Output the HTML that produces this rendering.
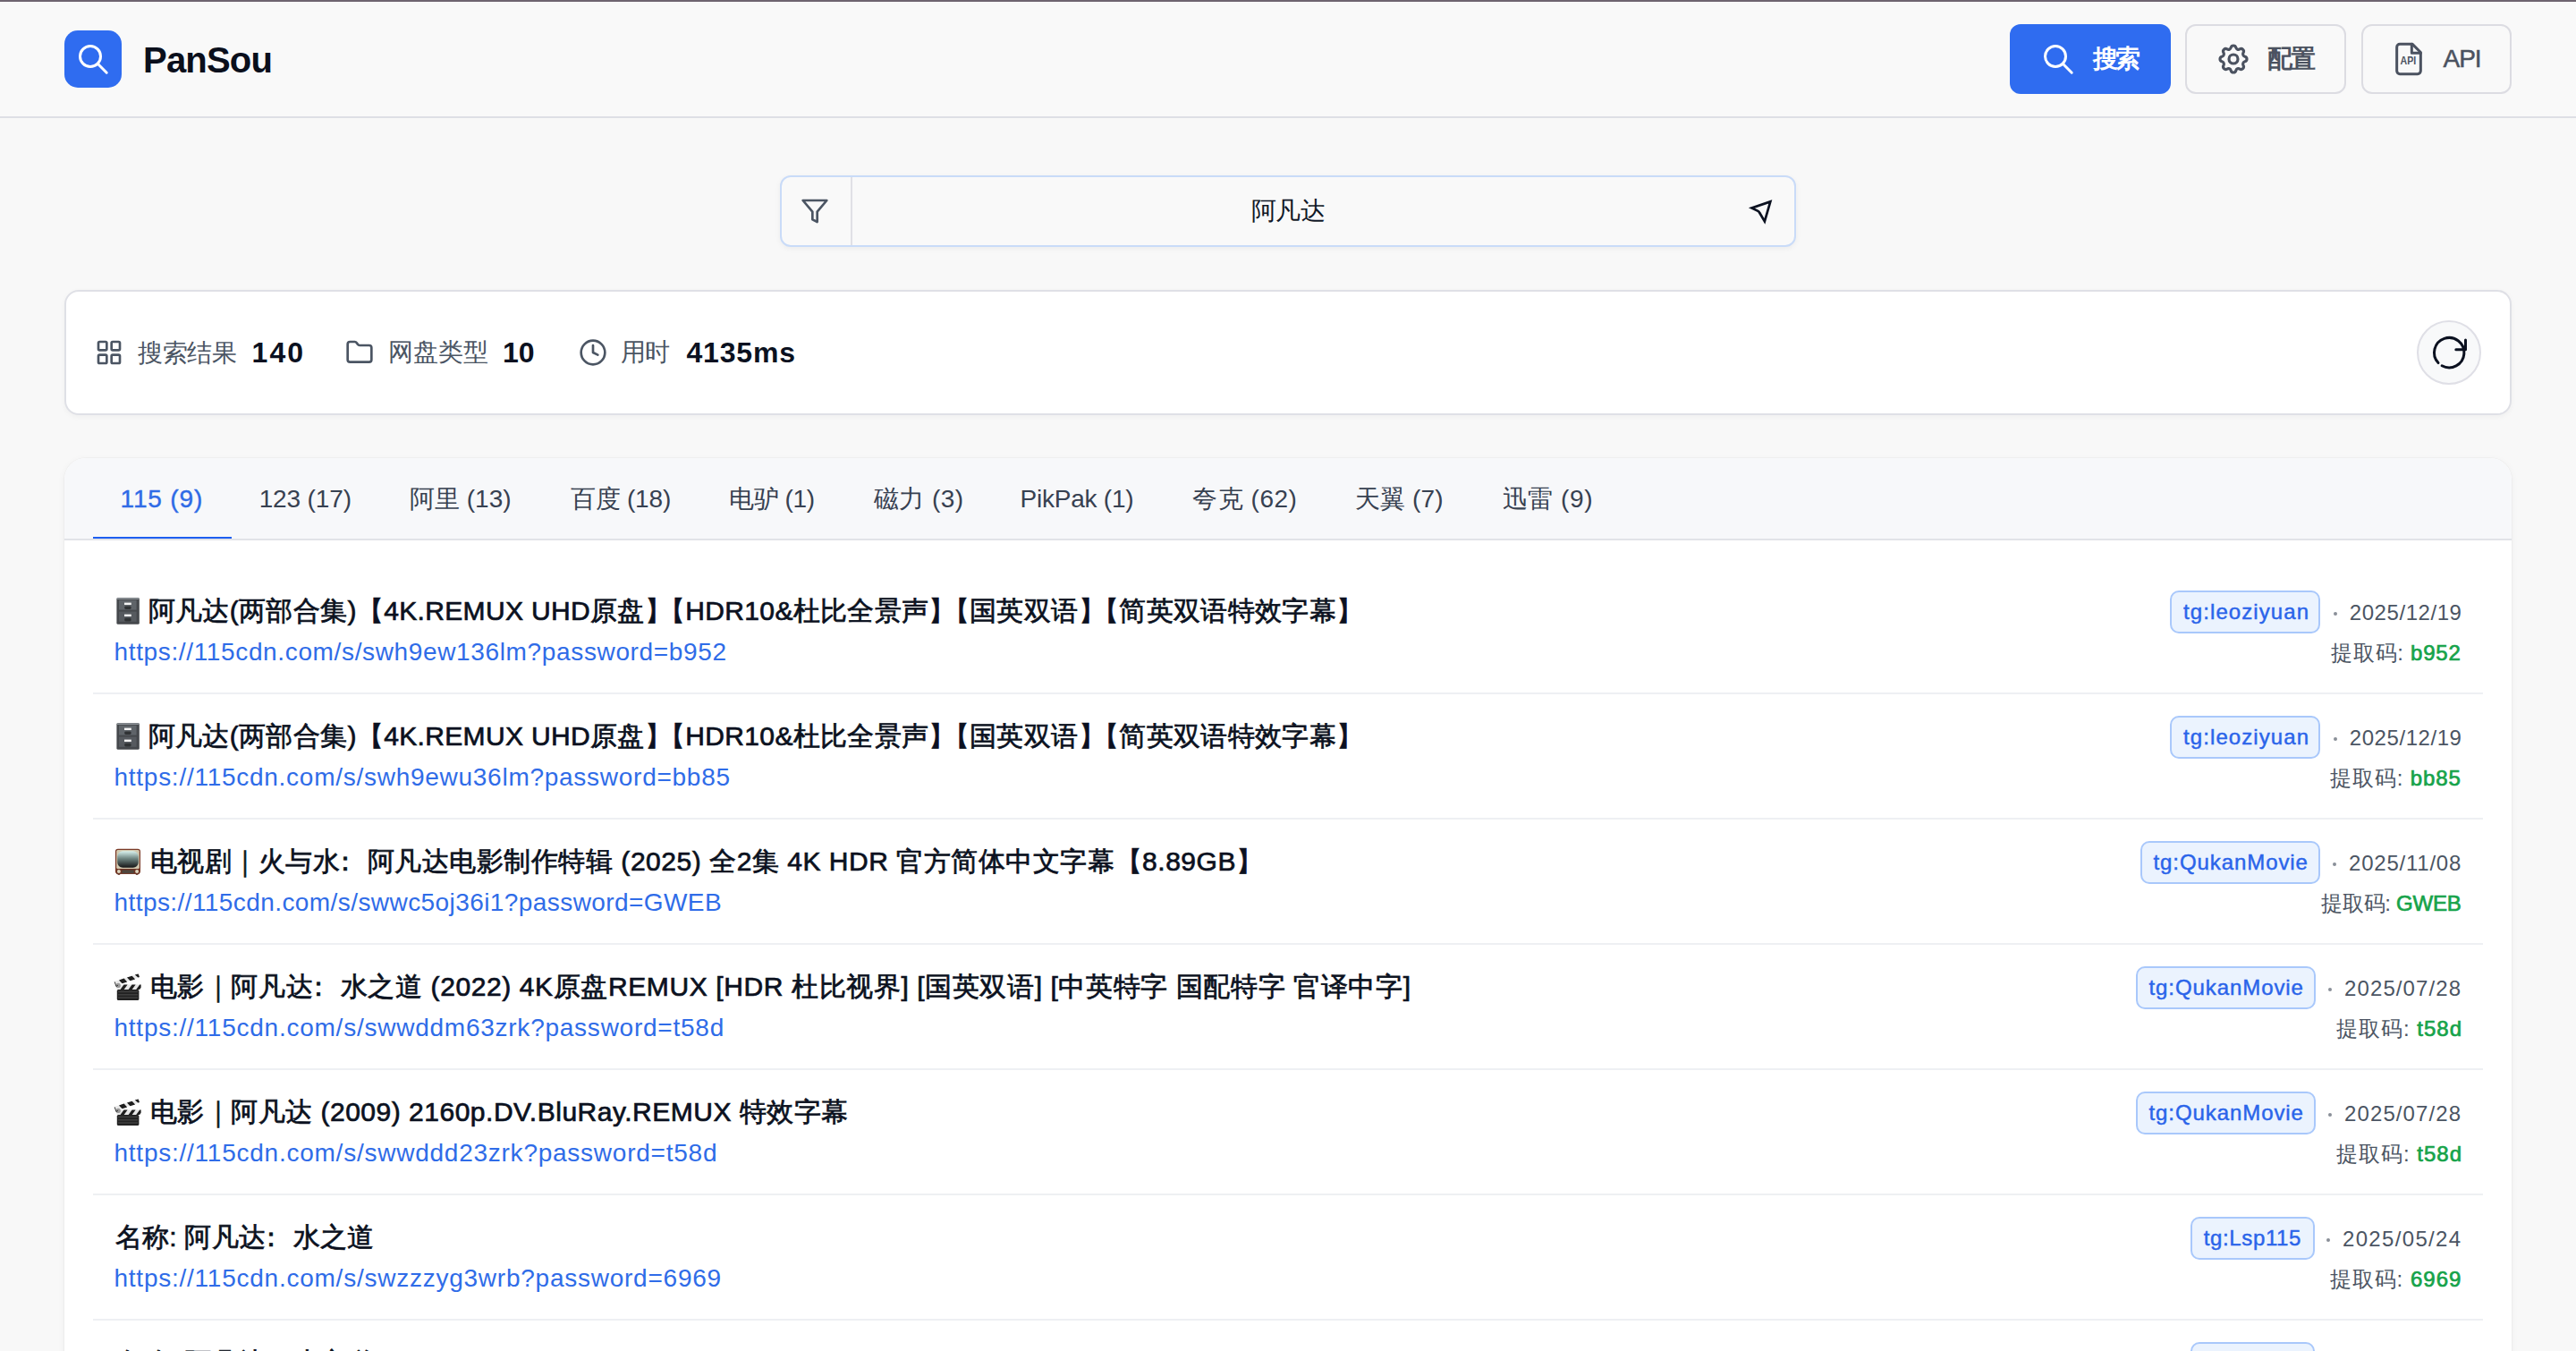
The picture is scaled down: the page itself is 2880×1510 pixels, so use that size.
<!DOCTYPE html>
<html lang="zh"><head><meta charset="utf-8"><title>PanSou</title>
<style>
html,body{margin:0;padding:0;}
body{width:2880px;height:1510px;overflow:hidden;position:relative;background:#f8f8f8;font-family:"Liberation Sans",sans-serif;color:#111827;}
.a{position:absolute}
@media (max-width:1500px){html{zoom:0.5}}
.t{position:absolute;white-space:nowrap}
#topline{position:absolute;left:0;top:0;width:2880px;height:2px;background:#6e6470}
#hdr{position:absolute;left:0;top:2px;width:2880px;height:128px;background:#f9f9f9;border-bottom:2px solid #dedfe5}
#logo{position:absolute;left:72px;top:32px;width:64px;height:64px;border-radius:15px;background:#2f6cf0}
#logo svg{position:absolute;left:12px;top:12px}
.brand{font-weight:700;color:#0a0f1c}
.btn{position:absolute;top:27px;height:78px;box-sizing:border-box;border-radius:12px}
.btn svg{position:absolute;top:17px}
.btt{font-weight:700}
.btt.w{color:#fff}
.btt.g{color:#4b5260}
#b3t{font-weight:400;-webkit-text-stroke:0.5px #4b5260}
#b1{left:2247px;width:180px;background:#2f6cf0}
#b2{left:2443px;width:180px;border:2px solid #dcdce2}
#b3{left:2640px;width:168px;border:2px solid #dcdce2}
#search{position:absolute;left:872px;top:196px;width:1136px;height:80px;box-sizing:border-box;border:2px solid #c9dbf8;border-radius:12px;background:#f9f9f9;box-shadow:0 2px 6px rgba(0,0,0,0.05)}
#sdiv{position:absolute;left:77px;top:0;width:2px;height:76px;background:#e0e0e6}
.stext{color:#111827}
#stats{position:absolute;left:72px;top:324px;width:2736px;height:140px;box-sizing:border-box;border:2px solid #dfe0e6;border-radius:16px;background:#fff;box-shadow:0 2px 6px rgba(0,0,0,0.04)}
.lbl{color:#4b5563}
.num{font-weight:700;color:#0b1120}
#refresh{position:absolute;left:2702px;top:358px;width:72px;height:72px;box-sizing:border-box;border-radius:50%;border:2px solid #dfdfe6;background:#f8f9fa}
#res{position:absolute;left:72px;top:512px;width:2736px;height:1100px;border-radius:24px;background:#fff;box-shadow:0 0 0 1px rgba(0,0,0,0.025), 0 2px 8px rgba(0,0,0,0.05);overflow:hidden}
#tabs{position:absolute;left:0;top:0;width:2736px;height:90px;background:#f7f8fa;border-bottom:2px solid #e1e3e8}
.tab{color:#374151}
.tab.act{color:#2f6be6;-webkit-text-stroke:0.4px #2f6be6}
#uline{position:absolute;left:104px;top:600px;width:155px;height:2px;background:#1d5ef0}
.title{font-weight:400;color:#0b1120;-webkit-text-stroke:0.7px #0b1120}
.emo{position:absolute;left:124px;width:40px;height:40px}
.link{color:#2f6ce8}
.tagbox{position:absolute;height:48px;box-sizing:border-box;border:2px solid #a9c8fb;background:#ebf3fe;border-radius:10px}
.tagt{color:#2a64ea;-webkit-text-stroke:0.45px #2a64ea}
.dot{position:absolute;width:4px;height:4px;border-radius:50%;background:#8a8f98}
.date{color:#4b5563}
.codel{color:#4b5563}
.code{color:#16a34a;font-weight:400;-webkit-text-stroke:0.7px #16a34a}
.fc{position:relative;left:-9px}
.tr{margin-left:-15px}
.divd{position:absolute;left:104px;width:2672px;height:2px;background:#eef0f3}
</style></head><body>
<div id="topline"></div>
<div id="hdr">
  <div id="logo"><svg width="40" height="40" viewBox="0 0 40 40" fill="none" stroke="#fff" stroke-width="3" stroke-linecap="round" style="left:12.8px;top:12.5px"><circle cx="16" cy="16" r="11.5"/><path d="M24.3 24.3 L34.2 34.2"/></svg></div>
</div>
<div class="btn" id="b1"><svg width="40" height="40" viewBox="0 0 40 40" fill="none" stroke="#fff" stroke-width="3" stroke-linecap="round" style="left:34.5px;top:19.5px"><circle cx="16" cy="16" r="11.5"/><path d="M24.3 24.3 L34.2 34.2"/></svg></div>
<div class="btn" id="b2"><svg width="40" height="40" viewBox="0 0 24 24" fill="none" stroke="#4b5260" stroke-width="1.9" stroke-linecap="round" stroke-linejoin="round" style="left:31.8px;top:16.8px"><path d="M10.325 4.317c.426 -1.756 2.924 -1.756 3.35 0a1.724 1.724 0 0 0 2.573 1.066c1.543 -.94 3.31 .826 2.37 2.37a1.724 1.724 0 0 0 1.065 2.572c1.756 .426 1.756 2.924 0 3.35a1.724 1.724 0 0 0 -1.066 2.573c.94 1.543 -.826 3.31 -2.37 2.37a1.724 1.724 0 0 0 -2.572 1.065c-.426 1.756 -2.924 1.756 -3.35 0a1.724 1.724 0 0 0 -2.573 -1.066c-1.543 .94 -3.310 -.826 -2.37 -2.37a1.724 1.724 0 0 0 -1.065 -2.572c-1.756 -.426 -1.756 -2.924 0 -3.35a1.724 1.724 0 0 0 1.066 -2.573c-.94 -1.543 .826 -3.31 2.37 -2.37c1 .608 2.296 .07 2.572 -1.065z"/><circle cx="12" cy="12" r="3"/></svg></div>
<div class="btn" id="b3"><svg width="40" height="40" viewBox="0 0 24 24" fill="none" stroke="#4b5260" stroke-width="1.8" stroke-linecap="round" stroke-linejoin="round" style="left:31px;top:16.9px"><path d="M14.5 2H6a2 2 0 0 0-2 2v16a2 2 0 0 0 2 2h12a2 2 0 0 0 2-2V7.5L14.5 2z"/><polyline points="14 2 14 8 20 8"/><text x="11.65" y="15.45" text-anchor="middle" font-size="7.2" font-weight="700" fill="#4b5260" stroke="none" font-family="Liberation Sans" textLength="10.6" lengthAdjust="spacingAndGlyphs">API</text></svg></div>
<div id="search">
  <svg class="a" style="left:20.9px;top:21.9px;color:#4b5563" width="32" height="32" viewBox="0 0 24 24" fill="none" stroke="currentColor" stroke-linecap="round" stroke-linejoin="round" stroke-width="2"><polygon points="22 3 2 3 10 12.46 10 19 14 21 14 12.46 22 3"/></svg>
  <div id="sdiv"></div>
  <svg class="a" style="left:1074px;top:18px" width="40" height="40" viewBox="0 0 40 40" fill="none" stroke="#0b1120" stroke-width="2.7" stroke-linejoin="miter" stroke-miterlimit="10"><path d="M31.3 9.4 L10.4 16.4 L17.4 19.9 Q18.6 20.6 19.2 21.8 L24.9 31.4 Z"/></svg>
</div>
<div id="stats">
  <svg class="a" style="left:32px;top:52px;color:#4b5563" width="32" height="32" viewBox="0 0 24 24" fill="none" stroke="currentColor" stroke-linecap="round" stroke-linejoin="round" stroke-width="2"><rect width="7" height="7" x="3" y="3" rx="1"/><rect width="7" height="7" x="14" y="3" rx="1"/><rect width="7" height="7" x="14" y="14" rx="1"/><rect width="7" height="7" x="3" y="14" rx="1"/></svg>
  <svg class="a" style="left:312px;top:52px;color:#4b5563" width="32" height="32" viewBox="0 0 24 24" fill="none" stroke="currentColor" stroke-linecap="round" stroke-linejoin="round" stroke-width="2"><path d="M20 20a2 2 0 0 0 2-2V8a2 2 0 0 0-2-2h-7.9a2 2 0 0 1-1.690-.9L9.6 3.9A2 2 0 0 0 7.93 3H4a2 2 0 0 0-2 2v13a2 2 0 0 0 2 2Z"/></svg>
  <svg class="a" style="left:573px;top:52px;color:#4b5563" width="32" height="32" viewBox="0 0 24 24" fill="none" stroke="currentColor" stroke-linecap="round" stroke-linejoin="round" stroke-width="2"><circle cx="12" cy="12" r="10"/><polyline points="12 6 12 12 16 14"/></svg>
</div>
<div id="refresh"><svg class="a" style="left:10px;top:10px" width="48" height="48" viewBox="0 0 48 48" fill="none" stroke="#0b1120" stroke-width="3" stroke-linecap="round" stroke-linejoin="round"><path d="M12.0 35.6 A16.7 16.7 0 1 1 16.1 38.8"/><path d="M42.5 9.9 V20.7 H31.8"/></svg></div>
<div id="res">
  <div id="tabs"></div>
</div>
<div id="uline"></div>
<div class="emo" style="top:662px"><svg width="40" height="40" viewBox="0 0 40 40"><rect x="6.4" y="6" width="25.4" height="29.8" rx="1.6" fill="#45484c"/><rect x="6.8" y="6.2" width="24.6" height="1.8" fill="#8a9095"/><rect x="9" y="8.8" width="19.6" height="10.8" fill="#5f6469"/><rect x="9" y="21.6" width="19.6" height="11.2" fill="#565a5f"/><rect x="15" y="11.6" width="7.8" height="2.4" fill="#f4f4f4"/><rect x="15" y="24.6" width="7.8" height="2.4" fill="#f4f4f4"/><rect x="15.2" y="15.4" width="7.4" height="3.6" rx="1.4" fill="#2f3234"/><rect x="15.2" y="28.8" width="7.4" height="3.6" rx="1.4" fill="#2f3234"/></svg></div>
<div class="tagbox" style="left:2426.0px;top:660px;width:168.3px"></div>
<div class="dot" style="left:2608.7px;top:684px"></div>
<div class="divd" style="top:774px"></div>
<div class="emo" style="top:802px"><svg width="40" height="40" viewBox="0 0 40 40"><rect x="6.4" y="6" width="25.4" height="29.8" rx="1.6" fill="#45484c"/><rect x="6.8" y="6.2" width="24.6" height="1.8" fill="#8a9095"/><rect x="9" y="8.8" width="19.6" height="10.8" fill="#5f6469"/><rect x="9" y="21.6" width="19.6" height="11.2" fill="#565a5f"/><rect x="15" y="11.6" width="7.8" height="2.4" fill="#f4f4f4"/><rect x="15" y="24.6" width="7.8" height="2.4" fill="#f4f4f4"/><rect x="15.2" y="15.4" width="7.4" height="3.6" rx="1.4" fill="#2f3234"/><rect x="15.2" y="28.8" width="7.4" height="3.6" rx="1.4" fill="#2f3234"/></svg></div>
<div class="tagbox" style="left:2426.0px;top:800px;width:168.3px"></div>
<div class="dot" style="left:2608.7px;top:824px"></div>
<div class="divd" style="top:914px"></div>
<div class="emo" style="top:942px"><svg width="40" height="40" viewBox="0 0 40 40"><defs><linearGradient id="scr" x1="0" y1="0" x2="0" y2="1"><stop offset="0" stop-color="#d9f3ef"/><stop offset="0.45" stop-color="#6f8682"/><stop offset="1" stop-color="#151515"/></linearGradient></defs><rect x="4.9" y="6.7" width="28.1" height="28" rx="3" fill="#7a3a27"/><rect x="6.2" y="8" width="25.6" height="21" rx="1.5" fill="#d3cab0"/><rect x="7.2" y="9.2" width="23.6" height="18.6" rx="6" fill="url(#scr)"/><rect x="6.2" y="29.2" width="25.6" height="5.6" fill="#6b3323"/><circle cx="8.9" cy="32" r="2" fill="#dcd6bf"/><circle cx="29.1" cy="32" r="2" fill="#dcd6bf"/><rect x="12.4" y="30.4" width="13.2" height="3.6" fill="#4f463d"/><rect x="7.6" y="34.6" width="2.6" height="1.2" fill="#5a2a1c"/><rect x="27.8" y="34.6" width="2.6" height="1.2" fill="#5a2a1c"/></svg></div>
<div class="tagbox" style="left:2392.5px;top:940px;width:201.8px"></div>
<div class="dot" style="left:2608.0px;top:964px"></div>
<div class="divd" style="top:1054px"></div>
<div class="emo" style="top:1082px"><svg width="40" height="40" viewBox="0 0 40 40"><rect x="6.8" y="24" width="24.6" height="12" rx="1.6" fill="#222"/><rect x="8" y="25.6" width="22" height="1.6" fill="#3d3d3d"/><rect x="8" y="29" width="22" height="1.6" fill="#3d3d3d"/><rect x="8" y="32.2" width="22" height="1.6" fill="#3d3d3d"/><path d="M5.2 18.6 L33.6 18.6 L33.6 24 L6.8 24 Z" fill="#e6e6e6"/><path d="M10.5 24 L14.5 18.6 L18.6 18.6 L14.6 24 Z M19.6 24 L23.6 18.6 L27.6 18.6 L23.6 24 Z M28.2 24 L32.2 18.6 L33.6 18.6 L33.6 21.8 L31.9 24 Z" fill="#1e1e1e"/><path d="M4 15 L31.2 6.2 L32.2 10.2 L5.2 19.4 Z" fill="#e9e9e9"/><path d="M9 13.4 L14.6 11.6 L18.2 15.4 L12.6 17.2 Z M18 10.5 L23.6 8.7 L27.1 12.4 L21.5 14.2 Z M26.8 7.6 L30.6 6.4 L32 10 L30.3 10.6 Z" fill="#1e1e1e"/><circle cx="8.2" cy="19.4" r="2.6" fill="#9a9a9a"/><path d="M4.2 15.4 L6 20.6 L8 19" stroke="#333" stroke-width="1" fill="none"/></svg></div>
<div class="tagbox" style="left:2388.0px;top:1080px;width:201.4px"></div>
<div class="dot" style="left:2603.0px;top:1104px"></div>
<div class="divd" style="top:1194px"></div>
<div class="emo" style="top:1222px"><svg width="40" height="40" viewBox="0 0 40 40"><rect x="6.8" y="24" width="24.6" height="12" rx="1.6" fill="#222"/><rect x="8" y="25.6" width="22" height="1.6" fill="#3d3d3d"/><rect x="8" y="29" width="22" height="1.6" fill="#3d3d3d"/><rect x="8" y="32.2" width="22" height="1.6" fill="#3d3d3d"/><path d="M5.2 18.6 L33.6 18.6 L33.6 24 L6.8 24 Z" fill="#e6e6e6"/><path d="M10.5 24 L14.5 18.6 L18.6 18.6 L14.6 24 Z M19.6 24 L23.6 18.6 L27.6 18.6 L23.6 24 Z M28.2 24 L32.2 18.6 L33.6 18.6 L33.6 21.8 L31.9 24 Z" fill="#1e1e1e"/><path d="M4 15 L31.2 6.2 L32.2 10.2 L5.2 19.4 Z" fill="#e9e9e9"/><path d="M9 13.4 L14.6 11.6 L18.2 15.4 L12.6 17.2 Z M18 10.5 L23.6 8.7 L27.1 12.4 L21.5 14.2 Z M26.8 7.6 L30.6 6.4 L32 10 L30.3 10.6 Z" fill="#1e1e1e"/><circle cx="8.2" cy="19.4" r="2.6" fill="#9a9a9a"/><path d="M4.2 15.4 L6 20.6 L8 19" stroke="#333" stroke-width="1" fill="none"/></svg></div>
<div class="tagbox" style="left:2388.0px;top:1220px;width:201.4px"></div>
<div class="dot" style="left:2603.0px;top:1244px"></div>
<div class="divd" style="top:1334px"></div>
<div class="tagbox" style="left:2449.0px;top:1360px;width:138.5px"></div>
<div class="dot" style="left:2600.5px;top:1384px"></div>
<div class="divd" style="top:1474px"></div>
<div class="tagbox" style="left:2449.0px;top:1500px;width:138.5px"></div>
<div class="dot" style="left:2600.5px;top:1524px"></div>
<div class="divd" style="top:1614px"></div>
<div id="brand" class="t brand" style="left:160.00px;top:43.15px;font-size:40px;line-height:48px;letter-spacing:-0.800px">PanSou</div>
<div id="b1t" class="t btt w" style="left:2339.50px;top:47.80px;font-size:28px;line-height:36px;letter-spacing:-3.000px">搜索</div>
<div id="b2t" class="t btt g" style="left:2534.50px;top:48.10px;font-size:28px;line-height:36px;letter-spacing:-2.000px">配置</div>
<div id="b3t" class="t btt g" style="left:2731.50px;top:48.00px;font-size:28px;line-height:36px;letter-spacing:-1.000px">API</div>
<div id="stext" class="t stext" style="left:1398.70px;top:218.10px;font-size:28px;line-height:36px;letter-spacing:-0.500px">阿凡达</div>
<div id="lbl1" class="t lbl" style="left:154.00px;top:377.30px;font-size:28px;line-height:36px;letter-spacing:-0.333px">搜索结果</div>
<div id="num1" class="t num" style="left:281.60px;top:374.00px;font-size:32px;line-height:40px;letter-spacing:2.000px">140</div>
<div id="lbl2" class="t lbl" style="left:433.60px;top:376.30px;font-size:28px;line-height:36px;letter-spacing:-0.000px">网盘类型</div>
<div id="num2" class="t num" style="left:562.00px;top:374.00px;font-size:32px;line-height:40px;letter-spacing:0.000px">10</div>
<div id="lbl3" class="t lbl" style="left:694.00px;top:376.30px;font-size:28px;line-height:36px;letter-spacing:-1.000px">用时</div>
<div id="num3" class="t num" style="left:767.50px;top:374.00px;font-size:32px;line-height:40px;letter-spacing:0.800px">4135ms</div>
<div id="tab0" class="t tab act" style="left:134.60px;top:539.50px;font-size:28px;line-height:36px;letter-spacing:0.833px">115 (9)</div>
<div id="tab1" class="t tab" style="left:289.70px;top:539.50px;font-size:28px;line-height:36px;letter-spacing:-0.143px">123 (17)</div>
<div id="tab2" class="t tab" style="left:458.00px;top:539.50px;font-size:28px;line-height:36px;letter-spacing:0.000px">阿里 (13)</div>
<div id="tab3" class="t tab" style="left:637.70px;top:539.50px;font-size:28px;line-height:36px;letter-spacing:-0.167px">百度 (18)</div>
<div id="tab4" class="t tab" style="left:815.00px;top:539.50px;font-size:28px;line-height:36px;letter-spacing:-0.400px">电驴 (1)</div>
<div id="tab5" class="t tab" style="left:977.00px;top:539.50px;font-size:28px;line-height:36px;letter-spacing:0.400px">磁力 (3)</div>
<div id="tab6" class="t tab" style="left:1140.50px;top:539.50px;font-size:28px;line-height:36px;letter-spacing:-0.222px">PikPak (1)</div>
<div id="tab7" class="t tab" style="left:1333.30px;top:539.50px;font-size:28px;line-height:36px;letter-spacing:0.500px">夸克 (62)</div>
<div id="tab8" class="t tab" style="left:1514.70px;top:539.50px;font-size:28px;line-height:36px;letter-spacing:0.200px">天翼 (7)</div>
<div id="tab9" class="t tab" style="left:1679.50px;top:539.50px;font-size:28px;line-height:36px;letter-spacing:0.600px">迅雷 (9)</div>
<div id="title0" class="t title" style="left:165.80px;top:663.95px;font-size:30px;line-height:38px;letter-spacing:0.340px">阿凡达(两部合集)【4K.REMUX UHD原盘】<span class="tr">【</span>HDR10&amp;杜比全景声】<span class="tr">【</span>国英双语】<span class="tr">【</span>简英双语特效字幕】</div>
<div id="link0" class="t link" style="left:127.50px;top:710.90px;font-size:28px;line-height:36px;letter-spacing:0.644px">https://115cdn.com/s/swh9ew136lm?password=b952</div>
<div id="tag0" class="t tagt" style="left:2441.00px;top:668.10px;font-size:24px;line-height:32px;letter-spacing:1.091px">tg:leoziyuan</div>
<div id="date0" class="t date" style="left:2626.80px;top:668.90px;font-size:24px;line-height:32px;letter-spacing:0.556px">2025/12/19</div>
<div id="code0" class="t codel" style="left:2606.00px;top:713.70px;font-size:24px;line-height:32px;letter-spacing:0.750px">提取码: <span class="code">b952</span></div>
<div id="title1" class="t title" style="left:165.80px;top:803.95px;font-size:30px;line-height:38px;letter-spacing:0.340px">阿凡达(两部合集)【4K.REMUX UHD原盘】<span class="tr">【</span>HDR10&amp;杜比全景声】<span class="tr">【</span>国英双语】<span class="tr">【</span>简英双语特效字幕】</div>
<div id="link1" class="t link" style="left:127.50px;top:850.90px;font-size:28px;line-height:36px;letter-spacing:0.733px">https://115cdn.com/s/swh9ewu36lm?password=bb85</div>
<div id="tag1" class="t tagt" style="left:2441.00px;top:808.10px;font-size:24px;line-height:32px;letter-spacing:1.091px">tg:leoziyuan</div>
<div id="date1" class="t date" style="left:2626.80px;top:808.90px;font-size:24px;line-height:32px;letter-spacing:0.556px">2025/12/19</div>
<div id="code1" class="t codel" style="left:2605.00px;top:853.70px;font-size:24px;line-height:32px;letter-spacing:0.875px">提取码: <span class="code">bb85</span></div>
<div id="title2" class="t title" style="left:167.50px;top:943.95px;font-size:30px;line-height:38px;letter-spacing:0.529px">电视剧｜火与水<span class="fc">：</span>阿凡达电影制作特辑 (2025) 全2集 4K HDR 官方简体中文字幕【8.89GB】</div>
<div id="link2" class="t link" style="left:127.50px;top:990.90px;font-size:28px;line-height:36px;letter-spacing:0.422px">https://115cdn.com/s/swwc5oj36i1?password=GWEB</div>
<div id="tag2" class="t tagt" style="left:2407.50px;top:948.10px;font-size:24px;line-height:32px;letter-spacing:0.917px">tg:QukanMovie</div>
<div id="date2" class="t date" style="left:2626.00px;top:948.90px;font-size:24px;line-height:32px;letter-spacing:0.778px">2025/11/08</div>
<div id="code2" class="t codel" style="left:2595.00px;top:993.70px;font-size:24px;line-height:32px;letter-spacing:-0.250px">提取码: <span class="code">GWEB</span></div>
<div id="title3" class="t title" style="left:167.50px;top:1083.95px;font-size:30px;line-height:38px;letter-spacing:0.607px">电影｜阿凡达<span class="fc">：</span>水之道 (2022) 4K原盘REMUX [HDR 杜比视界] [国英双语] [中英特字 国配特字 官译中字]</div>
<div id="link3" class="t link" style="left:127.50px;top:1130.90px;font-size:28px;line-height:36px;letter-spacing:0.756px">https://115cdn.com/s/swwddm63zrk?password=t58d</div>
<div id="tag3" class="t tagt" style="left:2402.50px;top:1088.10px;font-size:24px;line-height:32px;letter-spacing:0.917px">tg:QukanMovie</div>
<div id="date3" class="t date" style="left:2621.00px;top:1088.90px;font-size:24px;line-height:32px;letter-spacing:1.111px">2025/07/28</div>
<div id="code3" class="t codel" style="left:2612.00px;top:1133.70px;font-size:24px;line-height:32px;letter-spacing:1.000px">提取码: <span class="code">t58d</span></div>
<div id="title4" class="t title" style="left:167.50px;top:1223.95px;font-size:30px;line-height:38px;letter-spacing:0.513px">电影｜阿凡达 (2009) 2160p.DV.BluRay.REMUX 特效字幕</div>
<div id="link4" class="t link" style="left:127.50px;top:1270.90px;font-size:28px;line-height:36px;letter-spacing:0.756px">https://115cdn.com/s/swwddd23zrk?password=t58d</div>
<div id="tag4" class="t tagt" style="left:2402.50px;top:1228.10px;font-size:24px;line-height:32px;letter-spacing:0.917px">tg:QukanMovie</div>
<div id="date4" class="t date" style="left:2621.00px;top:1228.90px;font-size:24px;line-height:32px;letter-spacing:1.111px">2025/07/28</div>
<div id="code4" class="t codel" style="left:2612.00px;top:1273.70px;font-size:24px;line-height:32px;letter-spacing:1.000px">提取码: <span class="code">t58d</span></div>
<div id="title5" class="t title" style="left:128.60px;top:1364.25px;font-size:30px;line-height:38px;letter-spacing:0.300px">名称: 阿凡达<span class="fc">：</span>水之道</div>
<div id="link5" class="t link" style="left:127.50px;top:1410.90px;font-size:28px;line-height:36px;letter-spacing:0.756px">https://115cdn.com/s/swzzzyg3wrb?password=6969</div>
<div id="tag5" class="t tagt" style="left:2463.80px;top:1368.10px;font-size:24px;line-height:32px;letter-spacing:0.625px">tg:Lsp115</div>
<div id="date5" class="t date" style="left:2619.00px;top:1368.90px;font-size:24px;line-height:32px;letter-spacing:1.333px">2025/05/24</div>
<div id="code5" class="t codel" style="left:2604.60px;top:1413.70px;font-size:24px;line-height:32px;letter-spacing:1.000px">提取码: <span class="code">6969</span></div>
<div id="title6" class="t title" style="left:128.60px;top:1504.25px;font-size:30px;line-height:38px;letter-spacing:0.300px">名称: 阿凡达<span class="fc">：</span>水之道</div>
<div id="link6" class="t link" style="left:127.50px;top:1550.90px;font-size:28px;line-height:36px;letter-spacing:0.756px">https://115cdn.com/s/swzzzyg3wrb?password=6969</div>
<div id="tag6" class="t tagt" style="left:2463.80px;top:1508.10px;font-size:24px;line-height:32px;letter-spacing:0.625px">tg:Lsp115</div>
<div id="date6" class="t date" style="left:2619.00px;top:1508.90px;font-size:24px;line-height:32px;letter-spacing:1.333px">2025/05/24</div>
<div id="code6" class="t codel" style="left:2604.60px;top:1553.70px;font-size:24px;line-height:32px;letter-spacing:1.000px">提取码: <span class="code">6969</span></div>
</body></html>
